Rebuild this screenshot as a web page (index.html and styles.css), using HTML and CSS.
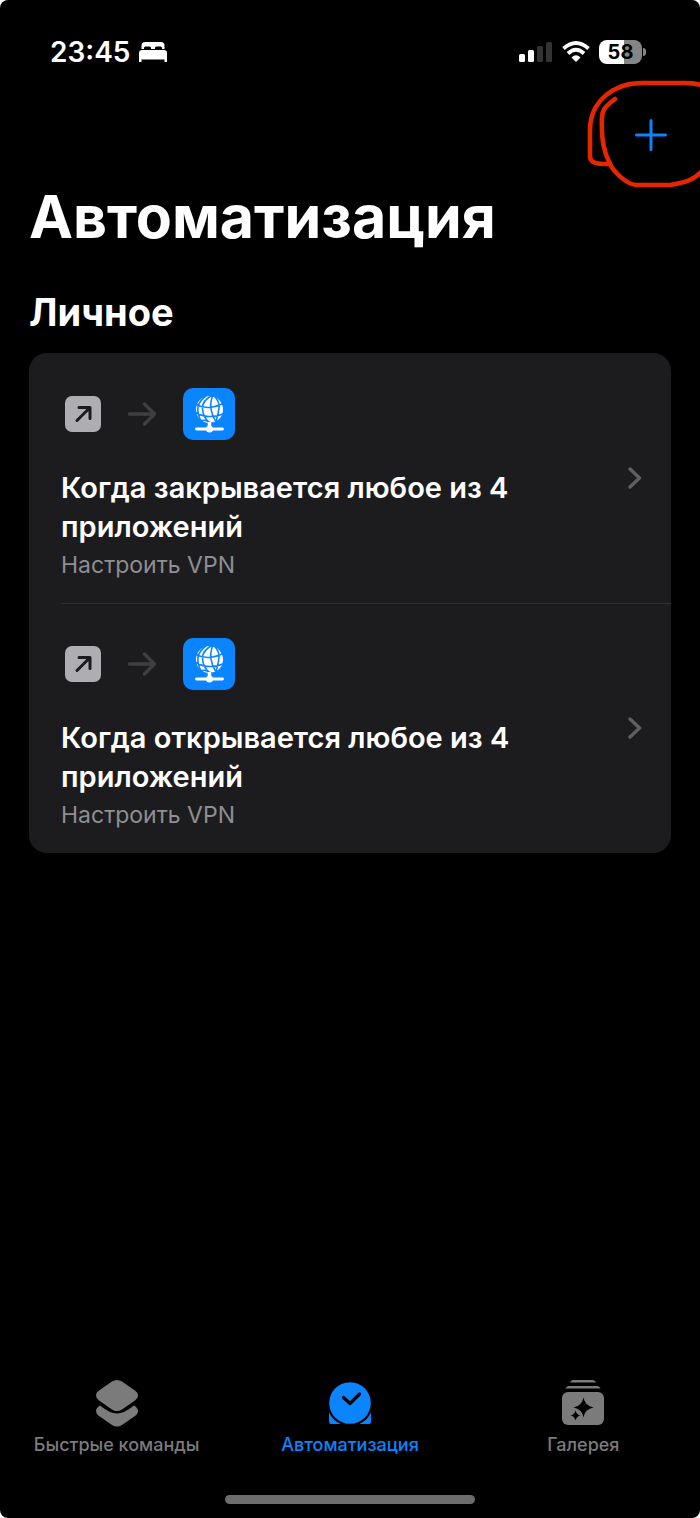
FILE: index.html
```html
<!DOCTYPE html>
<html lang="ru">

<head>
    <meta charset="UTF-8">
    <meta name="viewport" content="width=device-width, initial-scale=1.0">
    <title>Автоматизация</title>
    <link rel="stylesheet" href="styles.css">
</head>

<body>

    <!-- shared icons -->
    <svg class="sprite" aria-hidden="true">
        <symbol id="open-app" viewBox="0 0 36 36">
            <rect width="36" height="36" rx="7" fill="#aeaeb2" />
            <path d="M12 24.500L24.500 12M14 11.500h11v11" fill="none" stroke="#1c1c1e" stroke-width="3" stroke-linecap="round" stroke-linejoin="round" />
        </symbol>
        <symbol id="arrow" viewBox="0 0 28 24">
            <path d="M1.500 12h25M16.500 2l10 10-10 10" fill="none" stroke="#3f3f42" stroke-width="3.400" stroke-linecap="round" stroke-linejoin="round" />
        </symbol>
        <symbol id="vpn" viewBox="0 0 52 52">
            <rect width="52" height="52" rx="10" fill="#0a84ff" />
            <circle cx="26.500" cy="21.500" r="13.500" fill="#fff" />
            <path d="M12 16q7 4 14 3.500t15-4.500M12 24q6 4 14 4.500t15-3M17 33q5-2 9 1t10-1M30 7q-11 5-10.500 14T28 36M30 7q-3 7-2 14t5 13M30 7q7 6 6 13t-3 14M24 7q-8 6-9 12t3 14" fill="none" stroke="#0a84ff" stroke-width="1.600" />
            <path d="M26.500 34v7" stroke="#fff" stroke-width="3.500" />
            <path d="M13.500 41h26" stroke="#fff" stroke-width="2.800" stroke-linecap="round" />
            <circle cx="26.500" cy="41" r="3.500" fill="#fff" />
        </symbol>
        <symbol id="chevron" viewBox="0 0 14 22">
            <path d="M2 2l9.500 9L2 20" fill="none" stroke="#5f5f63" stroke-width="3.400" stroke-linecap="round" stroke-linejoin="round" />
        </symbol>
    </svg>

    <div class="screen">

        <div class="status-bar">
            <div class="status-left">
                <span>23:45</span>
                <svg width="30" height="22" viewBox="0 0 30 22" fill="#fff">
                    <path d="M3.500 8V4.500Q3.500 1 7 1h16Q26.500 1 26.500 4.500V8H24V7q0-1.500-1.500-1.500h-4Q17 5.500 17 7v1h-4V7q0-1.500-1.500-1.500h-4Q6 5.500 6 7v1z" />
                    <path d="M4 9h22q3 0 3 3v9h-2.500V18.500h-23V21H1v-9q0-3 3-3z" />
                </svg>
            </div>
            <div class="status-right">
                <svg width="34" height="22" viewBox="0 0 34 22" fill="#fff">
                    <rect x="0" y="13" width="6" height="8" rx="1.500" />
                    <rect x="9" y="9" width="6" height="12" rx="1.500" />
                    <rect x="18" y="5" width="6" height="16" rx="1.500" fill="#333" />
                    <rect x="27" y="1" width="6" height="20" rx="1.500" fill="#333" />
                </svg>
                <svg width="28" height="22" viewBox="0 0 28 22">
                    <path d="M1.500 7.500Q14-3.500 26.500 7.500M6 12.500Q14 5 22 12.500" fill="none" stroke="#fff" stroke-width="3.800" />
                    <path d="M9.500 16.500Q14 12 18.500 16.500L14 21z" fill="#fff" />
                </svg>
                <div class="battery">58</div>
            </div>
        </div>

        <header class="toolbar">
            <button class="add" type="button" aria-label="Добавить">
                <svg width="32" height="32" viewBox="0 0 32 32">
                    <path d="M1.500 16h29M16 1.500v29" stroke="#0a84ff" stroke-width="3" stroke-linecap="round" />
                </svg>
            </button>
            <!-- hand-drawn mark round the add button -->
            <svg class="mark" width="130" height="130" viewBox="0 0 130 130" fill="none" stroke="#e62600" stroke-width="4.600" stroke-linecap="round" stroke-linejoin="round">
                <path d="M132 15Q124 13 114 13H72C44 13 20 31 20 60V86C20 93 26 94 39 94" />
                <path d="M45 29C36 36 32 39 32 48C31 70 34 82 40 94C44 102 56 114 66 115H100C114 113 124 110 132 101" />
            </svg>
        </header>

        <main class="content">
            <h1>Автоматизация</h1>
            <h2>Личное</h2>

            <div class="card">
                <a class="row" href="#closed">
                    <div class="row-body">
                        <div class="icons">
                            <svg width="36" height="36"><use href="#open-app" /></svg>
                            <svg width="28" height="24"><use href="#arrow" /></svg>
                            <svg width="52" height="52"><use href="#vpn" /></svg>
                        </div>
                        <h3>Когда закрывается любое из 4 приложений</h3>
                        <p>Настроить VPN</p>
                    </div>
                    <svg class="chevron" width="14" height="22"><use href="#chevron" /></svg>
                </a>
                <a class="row" href="#opened">
                    <div class="row-body">
                        <div class="icons">
                            <svg width="36" height="36"><use href="#open-app" /></svg>
                            <svg width="28" height="24"><use href="#arrow" /></svg>
                            <svg width="52" height="52"><use href="#vpn" /></svg>
                        </div>
                        <h3>Когда открывается любое из 4 приложений</h3>
                        <p>Настроить VPN</p>
                    </div>
                    <svg class="chevron" width="14" height="22"><use href="#chevron" /></svg>
                </a>
            </div>
        </main>

        <nav class="tabs">
            <a class="tab" href="#shortcuts">
                <svg width="44" height="48" viewBox="0 0 44 48" fill="#7b7b7b">
                    <path d="M5 26.500Q15 34.500 22 34.500T39 26.500Q43 29 43 32T40 37L27 46Q22 49 17 46L4 37Q1 35 1 32T5 26.500z" />
                    <path d="M17 2.500Q22-.5 27 2.500L40 11.500Q43 13.500 43 16.500T40 21.500L27 30.500Q22 33.500 17 30.500L4 21.500Q1 19.500 1 16.500T4 11.500z" />
                </svg>
                <span>Быстрые команды</span>
            </a>
            <a class="tab active" href="#automation">
                <svg width="44" height="48" viewBox="0 0 44 48">
                    <rect x="1" y="31" width="42" height="14" rx="2" fill="#0a84ff" />
                    <circle cx="22" cy="24" r="23" fill="#000" />
                    <rect x="12" y="44" width="20" height="4" fill="#000" />
                    <circle cx="22" cy="24" r="20.800" fill="#0a84ff" />
                    <path d="M15.500 18.500l6.500 6L31.500 15" fill="none" stroke="#000" stroke-width="3.200" stroke-linecap="round" stroke-linejoin="round" />
                </svg>
                <span>Автоматизация</span>
            </a>
            <a class="tab" href="#gallery">
                <svg width="44" height="48" viewBox="0 0 44 48" fill="#7b7b7b">
                    <path d="M12 1h20q2 0 3 2.500H9Q10 1 12 1zM7.500 7h29q2 0 3 2.500h-35Q5.500 7 7.500 7z" />
                    <rect x="1" y="13" width="42" height="33" rx="6" />
                    <path d="M22.500 18.500q1.500 8.500 10 10q-8.500 1.500-10 10q-1.500-8.500-10-10q8.500-1.500 10-10zM14.500 31.500q1 4.200 5 5q-4 .8-5 5q-1-4.200-5-5q4-.8 5-5z" fill="#000" />
                </svg>
                <span>Галерея</span>
            </a>
        </nav>

        <div class="home-bar"></div>
    </div>

</body>

</html>
```
FILE: styles.css
```css
* {
    box-sizing: border-box;
}

body {
    margin: 0;
    background: #ffffff;
    color: #ffffff;
    font-family: Inter, "Liberation Sans", sans-serif;
}

h1,
h2,
h3,
p {
    margin: 0;
}

a {
    color: inherit;
    text-decoration: none;
}

svg {
    display: block;
    flex-shrink: 0;
}

.sprite {
    position: absolute;
    width: 0;
    height: 0;
}

.screen {
    display: flex;
    flex-direction: column;
    min-height: 100vh;
    background: #000000;
    border-radius: 8px;
    overflow: hidden;
}

/* status bar */
.status-bar {
    display: flex;
    justify-content: space-between;
    align-items: center;
    padding: 34px 58px 0 50px;
    height: 70px;
}

.status-left {
    display: flex;
    align-items: center;
    gap: 8px;
    font-size: 28px;
    font-weight: 600;
}

.status-right {
    display: flex;
    align-items: center;
    gap: 9px;
}

.battery {
    position: relative;
    width: 43px;
    border-radius: 8px;
    background: linear-gradient(to right, #ffffff 58%, #858585 58%);
    color: #000000;
    font-size: 20px;
    font-weight: 700;
    line-height: 24px;
    text-align: center;
}

.battery::after {
    content: "";
    position: absolute;
    top: 8px;
    right: -4px;
    width: 3px;
    height: 8px;
    border-radius: 0 3px 3px 0;
    background: #858585;
}

/* toolbar */
.toolbar {
    position: relative;
    display: flex;
    justify-content: flex-end;
    align-items: center;
    height: 130px;
    padding: 0 33px;
}

.add {
    padding: 0;
    border: none;
    background: none;
    cursor: pointer;
}

.mark {
    position: absolute;
    top: 0;
    right: 0;
    pointer-events: none;
}

/* list */
.content {
    flex: 1;
    margin-top: -20px;
    padding: 0 29px;
}

h1 {
    font-size: 59px;
    font-weight: 700;
    line-height: 74px;
}

h2 {
    margin: 34px 0 17px;
    font-size: 38px;
    font-weight: 700;
    line-height: 48px;
}

.card {
    border-radius: 18px;
    background: #1c1c1e;
}

.row {
    display: flex;
    align-items: center;
    gap: 24px;
    padding-right: 29px;
}

.row + .row {
    background: linear-gradient(#303033, #303033) top right / calc(100% - 32px) 1px no-repeat;
}

.row-body {
    flex: 1;
    padding: 35px 48px 24px 32px;
}

.icons {
    display: flex;
    align-items: center;
    gap: 27px;
    margin-bottom: 28px;
    padding-left: 4px;
}

h3 {
    font-size: 29px;
    font-weight: 600;
    line-height: 39px;
}

.row p {
    margin-top: 5px;
    color: #8e8e93;
    font-size: 23px;
    line-height: 28px;
}

/* tabs */
.tabs {
    display: grid;
    grid-template-columns: repeat(3, 1fr);
}

.tab {
    display: flex;
    flex-direction: column;
    align-items: center;
    gap: 6px;
    color: #7b7b7b;
    font-size: 18px;
    font-weight: 500;
    line-height: 24px;
}

.tab.active {
    color: #0a84ff;
}

.home-bar {
    width: 250px;
    height: 9px;
    margin: 38px auto 14px;
    border-radius: 5px;
    background: #6d6d6d;
}
```
